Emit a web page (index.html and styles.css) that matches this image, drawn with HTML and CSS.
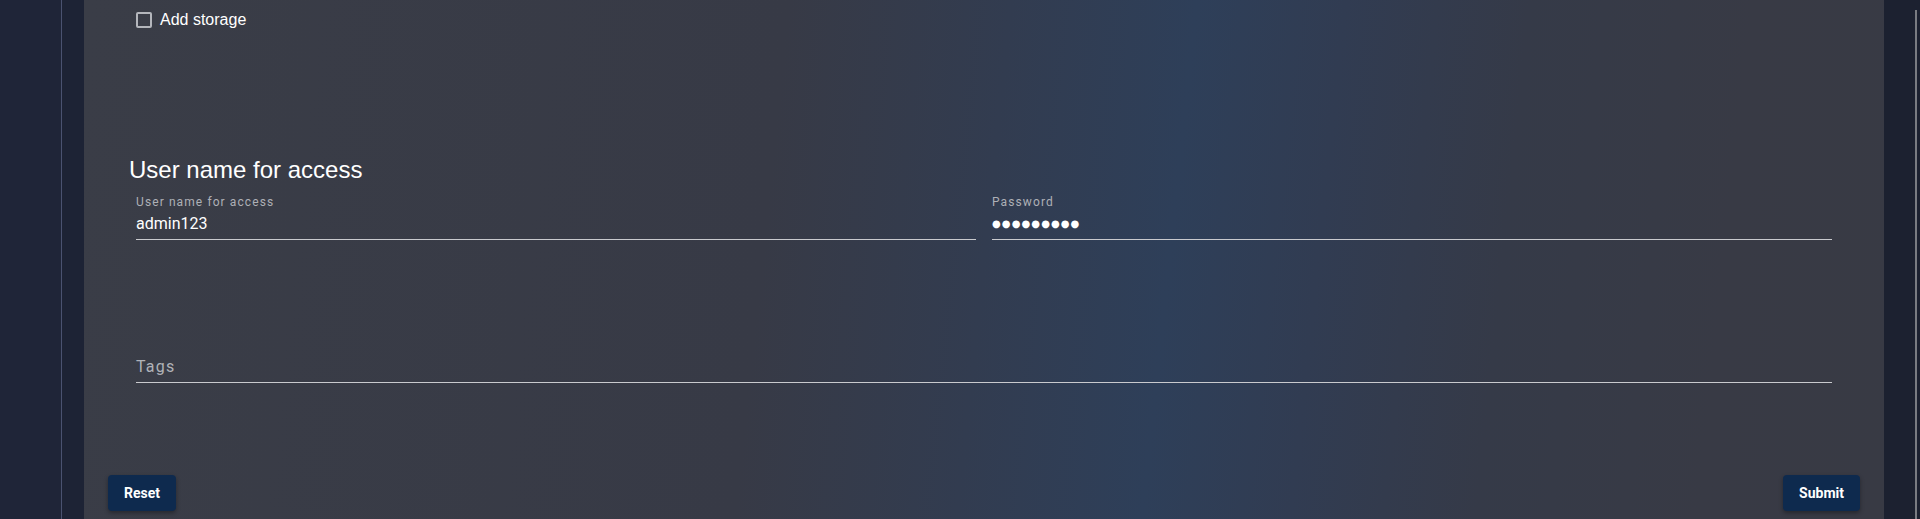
FILE: index.html
```html
<!DOCTYPE html>
<html lang="en">
<head>
<meta charset="utf-8">
<title>Form</title>
<link rel="stylesheet" href="styles.css">
</head>
<body>
<div class="app">
  <aside class="sidebar"></aside>
  <div class="divider"></div>
  <div class="gutter"></div>
  <main class="panel">
    <label class="check-row">
      <span class="checkbox"></span>
      <span class="check-text">Add storage</span>
    </label>
    <h2 class="section-title">User name for access</h2>
    <div class="fields">
      <div class="field">
        <div class="field-label">User name for access</div>
        <div class="field-value">admin123</div>
      </div>
      <div class="field">
        <div class="field-label">Password</div>
        <div class="field-value dots">●●●●●●●●●</div>
      </div>
    </div>
    <div class="tags-field">
      <div class="tags-label">Tags</div>
    </div>
    <div class="actions">
      <button class="btn">Reset</button>
      <button class="btn">Submit</button>
    </div>
  </main>
  <div class="right-rail">
    <div class="scrollbar"></div>
  </div>
</div>
</body>
</html>
```

FILE: styles.css
```css
* { box-sizing: border-box; }
html, body { margin: 0; padding: 0; }
body {
  background: #1f2538;
  height: 519px;
  overflow: hidden;
  font-family: "Liberation Sans", Arial, sans-serif;
}
.app {
  display: flex;
  height: 519px;
}
.sidebar {
  width: 61px;
  background: #1f2538;
}
.divider {
  width: 1px;
  background: #4a5270;
}
.gutter {
  width: 22px;
  background: #1d2335;
}
.panel {
  width: 1800px;
  display: flex;
  flex-direction: column;
  padding: 12px 24px 0 24px;
  background: linear-gradient(96deg, #3a3d47 0%, #373a46 38%, #323c50 50%, #2e3f59 60%, #313c52 68%, #353a48 78%, #383a45 90%, #383a44 100%);
}
.check-row {
  display: flex;
  align-items: center;
  gap: 8px;
  margin-left: 28px;
  height: 16px;
  color: #fff;
  font-size: 16px;
}
.checkbox {
  width: 16px;
  height: 16px;
  border: 2px solid #b4b6bc;
  border-radius: 2px;
}
.check-text { line-height: 16px; }
.section-title {
  margin: 128px 0 0 21px;
  font-weight: normal;
  font-size: 24px;
  line-height: 28px;
  color: #fff;
}
.fields {
  display: grid;
  grid-template-columns: 1fr 1fr;
  column-gap: 16px;
  margin: 10px 28px 0 28px;
  font-family: Roboto, sans-serif;
}
.field-label {
  font-size: 12px;
  line-height: 16px;
  letter-spacing: 1.1px;
  color: #aeb0b6;
}
.field-value {
  margin-top: 2px;
  font-size: 16px;
  line-height: 24px;
  color: #fff;
  padding-bottom: 3px;
  border-bottom: 1px solid #c9cace;
}
.dots {
  font-family: "DejaVu Sans", sans-serif;
  font-size: 10px;
  letter-spacing: 1.1px;
}
.tags-field {
  margin: 115px 28px 0 28px;
  border-bottom: 1px solid #c9cace;
  padding-bottom: 3px;
  font-family: Roboto, sans-serif;
}
.tags-label {
  font-size: 16px;
  line-height: 24px;
  letter-spacing: 1.2px;
  color: #b0b2b8;
}
.actions {
  display: flex;
  justify-content: space-between;
  margin-top: 92px;
}
.btn {
  height: 36px;
  padding: 0 16px;
  border: none;
  border-radius: 4px;
  background: #0e2a4e;
  color: #fff;
  font-family: Roboto, sans-serif;
  font-weight: bold;
  font-size: 14px;
  box-shadow: 0 2px 4px rgba(0,0,0,0.35);
}
.right-rail {
  width: 36px;
  background: #1c2130;
  padding: 10px 3px 0 0;
  display: flex;
  justify-content: flex-end;
}
.scrollbar {
  width: 2px;
  height: 100%;
  background: #7a7c82;
}
```
